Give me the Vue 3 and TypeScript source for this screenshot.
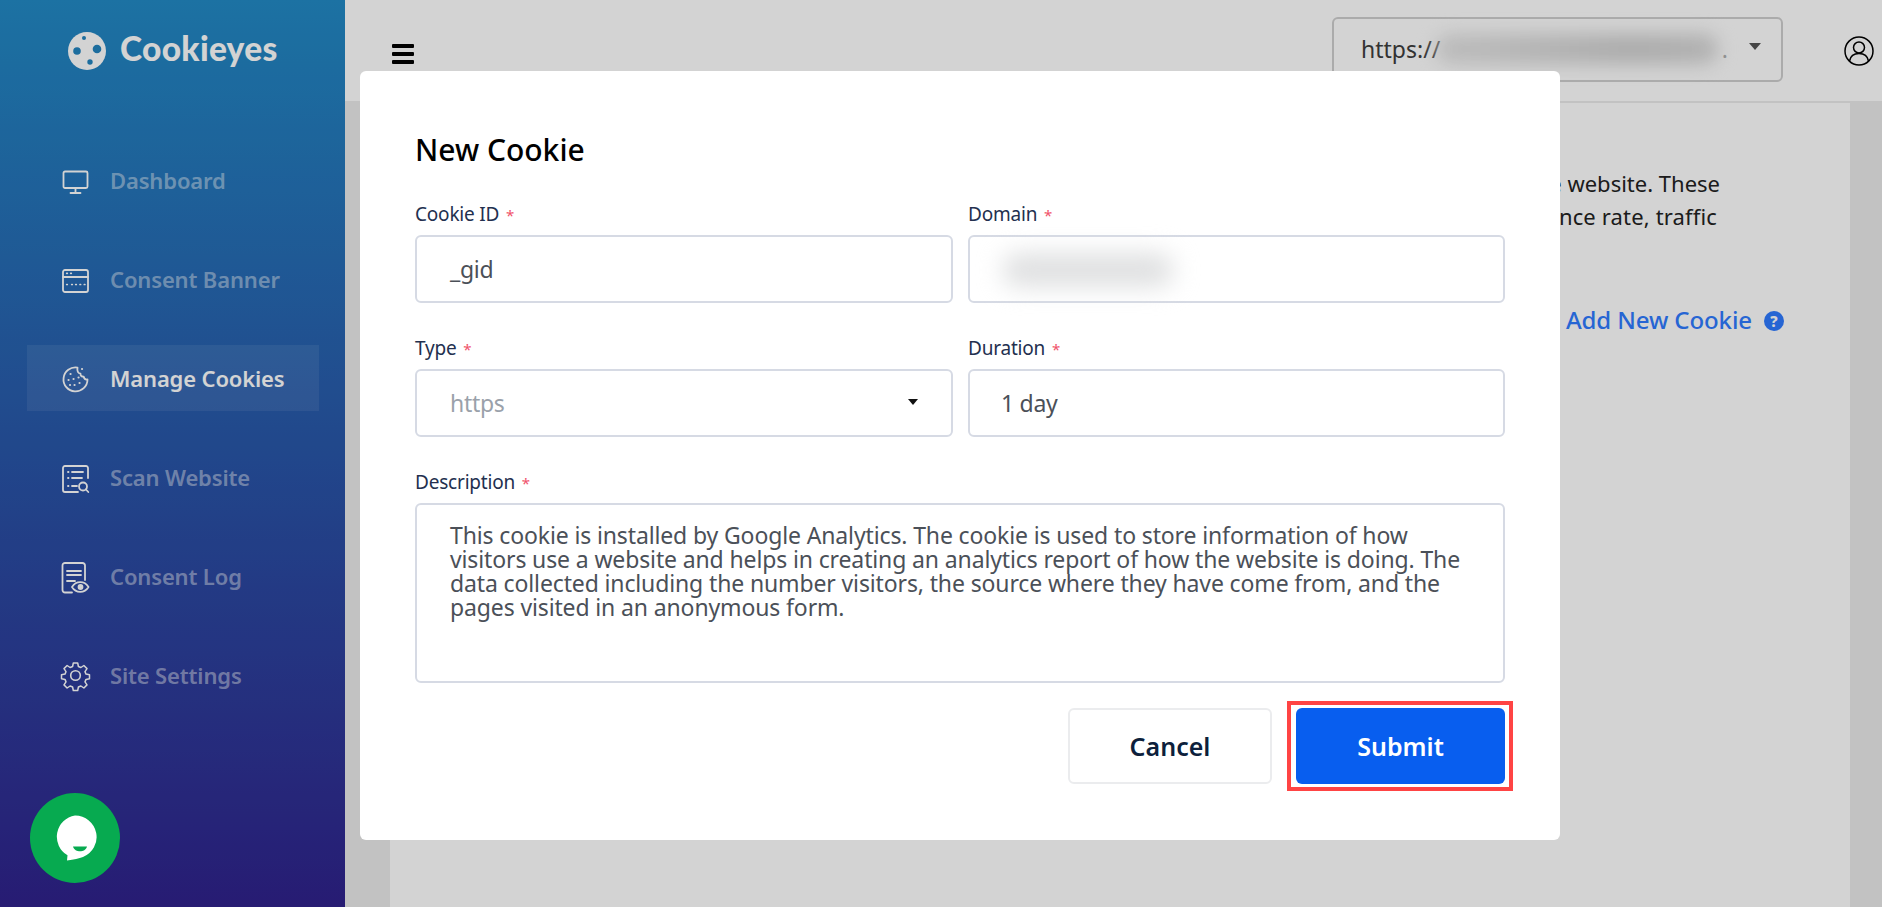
<script setup lang="ts">
const navItems = [
  { label: 'Dashboard', icon: 'monitor', active: false },
  { label: 'Consent Banner', icon: 'banner', active: false },
  { label: 'Manage Cookies', icon: 'cookie', active: true },
  { label: 'Scan Website', icon: 'scan', active: false },
  { label: 'Consent Log', icon: 'log', active: false },
  { label: 'Site Settings', icon: 'gear', active: false },
]
const description =
  'This cookie is installed by Google Analytics. The cookie is used to store information of how visitors use a website and helps in creating an analytics report of how the website is doing. The data collected including the number visitors, the source where they have come from, and the pages visited in an anonymous form.'
</script>

<template>
  <div class="page">
    <aside class="sidebar">
      <div class="brand">
        <svg class="brand-mark" viewBox="0 0 38 38">
          <circle cx="19" cy="19" r="19" fill="#fff" />
          <circle cx="16" cy="6" r="2" class="hole" />
          <circle cx="9" cy="19" r="3.800" class="hole" />
          <circle cx="29" cy="17" r="4.300" class="hole" />
          <circle cx="22" cy="30" r="2.700" class="hole" />
        </svg>
        <span class="brand-name">Cookieyes</span>
      </div>
      <nav class="nav">
        <a v-for="item in navItems" :key="item.label" class="nav-item" :class="{ active: item.active }">
          <svg class="nav-icon" viewBox="0 0 28 28" fill="none" stroke="#fff" stroke-width="1.800" stroke-linecap="round" stroke-linejoin="round">
            <template v-if="item.icon === 'monitor'">
              <rect x="2.500" y="5.500" width="24" height="16.500" rx="1.500" />
              <path d="M14.500 22v5M9.500 27h10" />
            </template>
            <template v-else-if="item.icon === 'banner'">
              <rect x="2" y="5" width="25" height="22" rx="2" />
              <path d="M2 12h25" />
              <path d="M5.700 8.300h.6M9.700 8.300h.6M5.700 19.500h.6M10.700 19.500h.6M14.700 19.500h.6M19 19.500h.6M23.300 19.500h.6" stroke-width="1.700" />
            </template>
            <template v-else-if="item.icon === 'cookie'">
              <path d="M16.500 3.600A12 12 0 1 0 26.500 15.500c-2.500.3-3.600-1.200-3.800-2.800-2 .2-3.300-1-3.200-3-2.400-.2-3.600-2.500-3-6.100z" />
              <path d="M9.500 10h.1M7.500 16h.1M12.500 15h.1M13.500 21h.1M18.500 19h.1M21 5h.1M9 21h.1M17.500 13.500h.1" stroke-width="2.100" />
            </template>
            <template v-else-if="item.icon === 'scan'">
              <path d="M27 15V5a2 2 0 0 0-2-2H4a2 2 0 0 0-2 2v22a2 2 0 0 0 2 2h13" />
              <path d="M7 9h.5M11 9h11M7 15h.5M11 15h10M7 23h.5M11 23h5" />
              <circle cx="22" cy="23.500" r="4" />
              <path d="M25 26.500l2.300 2.500" />
            </template>
            <template v-else-if="item.icon === 'log'">
              <path d="M11 30.500H4a2.500 2.500 0 0 1-2.500-2.500V3.500A2.500 2.500 0 0 1 4 1h17.500A2.500 2.500 0 0 1 24 3.500V18" />
              <path d="M6 9h14M6 13h14M6 19h8" />
              <path d="M11 25c4-6.500 12.500-6.500 16.500 0-4 6.500-12.500 6.500-16.500 0z" />
              <circle cx="19.500" cy="25" r="2" fill="#fff" />
            </template>
            <template v-else>
              <g transform="translate(.5 1)">
                <path d="M11.800 1h4.400l.7 3.500 2.500 1 3-2 3.100 3.100-2 3 1 2.500 3.500.7v3.900l-3.500.7-1 2.500 2 3-3.100 3.100-3-2-2.500 1-.7 3.500h-4.400l-.7-3.500-2.500-1-3 2-3.100-3.100 2-3-1-2.500-3.500-.7v-3.900l3.500-.7 1-2.500-2-3 3.100-3.100 3 2 2.500-1z" stroke-width="1.500" />
                <circle cx="14" cy="13.500" r="4.800" stroke-width="1.600" />
              </g>
            </template>
          </svg>
          <span>{{ item.label }}</span>
        </a>
      </nav>
    </aside>

    <div class="body">
      <header class="topbar">
        <button class="burger" aria-label="Menu"><i></i><i></i><i></i></button>
        <div class="site-select">
          <span>https://</span>
          <span class="site-blur"></span>
          <span class="site-dot">.</span>
          <span class="caret"></span>
        </div>
        <svg class="user" viewBox="0 0 30 30" fill="none" stroke="#000" stroke-width="1.500">
          <circle cx="15" cy="15" r="14" />
          <circle cx="15" cy="11.500" r="5.500" />
          <path d="M5.500 25c1-5.500 5-7.500 9.500-7.500s8.500 2 9.500 7.500" />
        </svg>
      </header>
      <main class="main">
        <section class="card">
          <p class="intro">
            the website. These<br />
            <span class="intro-second">bounce rate, traffic</span>
          </p>
          <div class="card-actions">
            <a class="add-link">Add New Cookie</a>
            <span class="help">?</span>
          </div>
        </section>
      </main>
    </div>

    <div class="overlay"></div>

    <form class="modal" @submit.prevent>
      <h2 class="modal-title">New Cookie</h2>
      <div class="form-grid">
        <div class="field">
          <label>Cookie ID <em>*</em></label>
          <div class="control">_gid</div>
        </div>
        <div class="field">
          <label>Domain <em>*</em></label>
          <div class="control"><span class="domain-blur"></span></div>
        </div>
        <div class="field">
          <label>Type <em>*</em></label>
          <div class="control select-control"><span>https</span><span class="caret small"></span></div>
        </div>
        <div class="field">
          <label>Duration <em>*</em></label>
          <div class="control tight">1 day</div>
        </div>
        <div class="field wide">
          <label>Description <em>*</em></label>
          <div class="control textarea">{{ description }}</div>
        </div>
      </div>
      <div class="actions">
        <button type="button" class="btn cancel">Cancel</button>
        <div class="highlight"><button type="submit" class="btn submit">Submit</button></div>
      </div>
    </form>

    <button class="chat" aria-label="Chat">
      <svg viewBox="0 0 44 46" width="44" height="46">
        <path d="M22 .5a21.500 21.500 0 0 1 8 41.500c-4 1.600-9 2.600-16 3.500l.5-5.200A21.500 21.500 0 0 1 22 .5z" fill="#fff" />
        <path d="M20 31.500h14c-1 3.600-4 4.800-7 4.800s-6-1.200-7-4.800z" fill="#07aa50" />
      </svg>
    </button>
  </div>
</template>

<style>
html, body { margin: 0; padding: 0; overflow: hidden; }
</style>

<style scoped>
* { box-sizing: border-box; }
.page {
  position: relative;
  display: flex;
  width: 1882px;
  height: 907px;
  overflow: hidden;
  font-family: "Noto Sans", "Open Sans", sans-serif;
  color: #222;
  background: #ebebeb;
}
.sidebar {
  flex: 0 0 345px;
  height: 100%;
  background: linear-gradient(180deg, #228ac5 0%, #30228c 100%);
}
.brand {
  display: flex;
  align-items: center;
  height: 38px;
  margin: 32px 0 0 68px;
  gap: 14px;
}
.brand-mark { width: 38px; height: 38px; }
.hole { fill: #2384bf; }
.brand-name {
  margin-bottom: 6px;
  font-family: Lato, "Noto Sans", sans-serif;
  font-size: 33.500px;
  font-weight: 900;
  color: #fff;
  letter-spacing: 0.3px;
}
.nav {
  display: flex;
  flex-direction: column;
  margin: 77px 26px 0 27px;
  gap: 33px;
}
.nav-item {
  display: flex;
  align-items: center;
  height: 66px;
  padding-left: 34px;
  gap: 21px;
  font-size: 22px;
  font-weight: 600;
  letter-spacing: -0.15px;
  color: rgba(255, 255, 255, 0.45);
}
.nav-item.active {
  color: #fff;
  background: rgba(255, 255, 255, 0.08);
}
.nav-icon { width: 28px; height: 28px; flex: none; overflow: visible; }
.body { flex: 1; display: flex; flex-direction: column; min-width: 0; }
.topbar {
  display: flex;
  align-items: center;
  height: 101px;
  padding: 0 8px 0 47px;
  background: #fff;
}
.burger {
  display: flex;
  flex-direction: column;
  gap: 4px;
  width: 22px;
  margin-top: 6px;
  padding: 0;
  border: 0;
  background: none;
}
.burger i { display: block; height: 4px; background: #000; border-radius: 1px; }
.site-select {
  display: flex;
  align-items: center;
  width: 451px;
  height: 65px;
  margin-left: auto;
  margin-bottom: 3px;
  padding: 0 20px 0 27px;
  border: 2px solid #cfcfcf;
  border-radius: 6px;
  font-size: 23px;
  color: #3d3d3d;
}
.site-blur {
  flex: 1;
  height: 30px;
  margin: 0 0 0 -4px;
  background: linear-gradient(90deg, #e4e4e4, #d0d0d0 70%, #d8d8d8);
  border-radius: 14px;
  filter: blur(9px);
}
.site-dot { margin: 0 21px 0 4px; color: #aaa; }
.caret {
  width: 0;
  height: 0;
  border-left: 6.500px solid transparent;
  border-right: 6.500px solid transparent;
  border-top: 7px solid #555;
  margin-top: -5px;
}
.caret.small {
  border-left-width: 5.500px;
  border-right-width: 5.500px;
  border-top-width: 6px;
  border-top-color: #111;
  margin-top: -2px;
}
.user { width: 30px; height: 30px; margin-left: 61px; flex: none; }
.main { flex: 1; padding: 2px 32px 0 45px; min-height: 0; }
.card {
  height: 100%;
  padding: 64px 0 0 0;
  background: #fff;
  text-align: right;
}
.intro {
  margin: 0 130px 0 0;
  font-size: 22px;
  line-height: 33px;
  color: #222;
  white-space: nowrap;
}
.intro-second { display: inline-block; margin-right: 3px; letter-spacing: 0.15px; }
.card-actions {
  display: flex;
  justify-content: flex-end;
  align-items: center;
  gap: 12px;
  margin: 70px 66px 0 0;
}
.add-link { font-size: 24px; font-weight: 500; color: #2f7bff; letter-spacing: -0.1px; }
.help {
  display: flex;
  align-items: center;
  justify-content: center;
  width: 20px;
  height: 20px;
  margin-top: 2px;
  border-radius: 50%;
  background: #2f7bff;
  color: #fff;
  font-size: 15px;
  font-weight: 800;
}
.overlay {
  position: absolute;
  inset: 0;
  background: rgba(0, 0, 0, 0.173);
}
.modal {
  position: absolute;
  left: 360px;
  top: 71px;
  width: 1200px;
  height: 769px;
  padding: 60px 55px 0 55px;
  background: #fff;
  border-radius: 6px;
}
.modal-title {
  margin: 0;
  font-size: 30px;
  line-height: 38px;
  font-weight: 500;
  color: #000;
}
.form-grid {
  display: grid;
  grid-template-columns: 538px 537px;
  column-gap: 15px;
  row-gap: 32px;
  margin-top: 32px;
}
.field { display: flex; flex-direction: column; min-width: 0; }
.field.wide { grid-column: 1 / 3; }
label {
  font-size: 19px;
  line-height: 26px;
  margin-bottom: 8px;
  color: #23304f;
  letter-spacing: -0.2px;
}
label em { color: #f0526b; font-style: normal; font-size: 15px; line-height: 1; margin-left: 2px; }
.control {
  display: flex;
  align-items: center;
  height: 68px;
  padding: 0 33px 0 33px;
  border: 2px solid #d6dae4;
  border-radius: 6px;
  font-size: 23px;
  letter-spacing: -0.3px;
  color: #4b5058;
  background: #fff;
}
.control.tight { padding-left: 31px; }
.select-control { justify-content: space-between; color: #9aa1aa; }
.domain-blur {
  display: block;
  width: 170px;
  height: 34px;
  margin: 2px 0 0 0;
  background: #dfe0e1;
  border-radius: 15px;
  filter: blur(12px);
}
.textarea {
  display: block;
  height: 180px;
  padding: 18px 28px 0 33px;
  font-size: 23px;
  line-height: 24px;
  letter-spacing: -0.13px;
}
.actions {
  display: flex;
  justify-content: flex-end;
  align-items: center;
  margin: 18px -8px 0 0;
  gap: 15px;
}
.highlight {
  padding: 3px 4px 3px 5px;
  border: 4px solid #ff4444;
  background: #fff;
}
.btn {
  display: block;
  height: 76px;
  border-radius: 6px;
  font-family: "Noto Sans", sans-serif;
  font-size: 25px;
  font-weight: 600;
}
.cancel { width: 204px; background: #fff; border: 2px solid #ebecee; color: #0d1f3c; }
.submit { width: 209px; background: #085eef; border: 0; color: #fff; }
.chat {
  position: absolute;
  left: 30px;
  top: 793px;
  display: flex;
  align-items: center;
  justify-content: center;
  width: 90px;
  height: 90px;
  padding: 0;
  border: 0;
  border-radius: 50%;
  background: #07aa50;
}
</style>
